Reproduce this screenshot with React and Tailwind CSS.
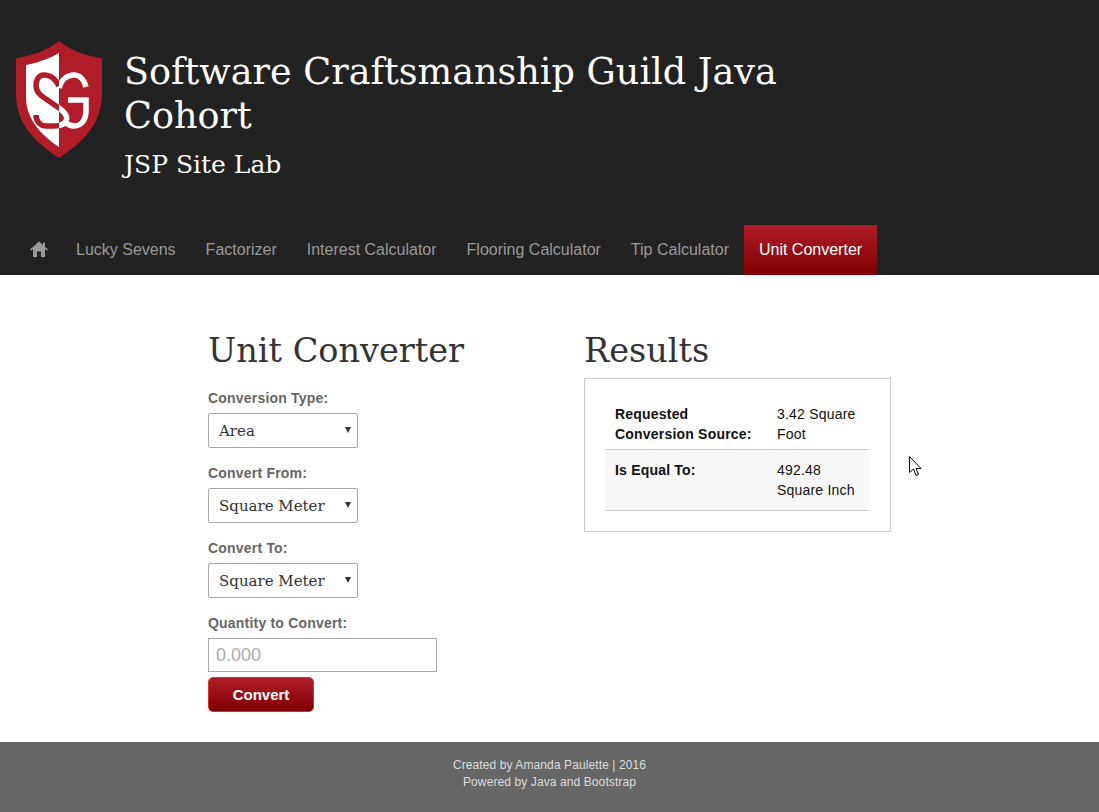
import React from "react";

const serif = "font-['DejaVu_Serif',serif]";
const sans = "font-['Liberation_Sans',Arial,sans-serif]";

const S_PATH = "M43 45C39 37 33 34 28 34C22 34 20 40 20 44C20 51 24 54 30 58L43 67C50 72 52 76 50 80C48 84 44 85 38 85L30 85C24 85 20 80 20 74";
const G_TOP = "M70 46C68 38 63 34 58 34C50 34 45 40 43 47";
const G_BOTTOM = "M49 81C52 84 55 85 58 85C66 85 70 78 70 70L70 59L52 59";

function Logo() {
  return (
    <svg width="86" height="118" viewBox="0 0 86 118" className="shrink-0">
      <defs>
        <clipPath id="left-half"><rect x="0" y="0" width="43" height="118" /></clipPath>
        <clipPath id="right-half"><rect x="43" y="0" width="43" height="118" /></clipPath>
      </defs>
      <path d="M43 0C54 9 70 15 85 17Q86 17 86 19L86 52C86 85 65 102 43 117C21 102 0 85 0 52L0 19Q0 17 1 17C16 15 32 9 43 0Z" fill="#b01c27" />
      <path d="M43 12C33 18 20 22 10 24L10 56C10 80 28 96 43 106Z" fill="#fff" />
      <g fill="none" strokeWidth="5.5">
        <path d={S_PATH} stroke="#b01c27" clipPath="url(#left-half)" />
        <path d={S_PATH} stroke="#fff" clipPath="url(#right-half)" />
        <path d={G_TOP} stroke="#fff" clipPath="url(#right-half)" />
        <path d={G_BOTTOM} stroke="#fff" clipPath="url(#right-half)" />
      </g>
    </svg>
  );
}

function Field({ label, value }) {
  return (
    <div className="mb-[15px]">
      <label className={`block text-sm font-bold leading-[20px] tracking-[0.2px] text-[#666] mb-[5px] ${sans}`}>{label}</label>
      <div className="relative w-[150px] h-[35px]">
        <select defaultValue={value} className={`appearance-none w-full h-full border border-[#aaa] rounded-[2px] bg-white pl-[10px] pt-[1px] text-[#333] text-[15px] ${serif}`}>
          <option>{value}</option>
        </select>
        <span className="absolute right-[7px] top-[14px] w-0 h-0 border-l-[3px] border-r-[3px] border-t-[6px] border-l-transparent border-r-transparent border-t-[#333]" />
      </div>
    </div>
  );
}

export default function App() {
  const nav = ["Lucky Sevens", "Factorizer", "Interest Calculator", "Flooring Calculator", "Tip Calculator"];
  return (
    <div className={`relative min-h-[812px] flex flex-col bg-white ${sans}`}>
      <header className="bg-[#222] h-[275px] flex flex-col">
        <div className="flex flex-1 pl-[16px] pt-[41px] gap-[22px]">
          <Logo />
          <div className="w-[700px] pt-[9px]">
            <h1 className={`text-[36.6px] leading-[44px] text-white ${serif}`}>Software Craftsmanship Guild Java Cohort</h1>
            <p className={`text-[25px] leading-[30px] mt-[12px] text-white ${serif}`}>JSP Site Lab</p>
          </div>
        </div>
        <nav className="h-[50px] flex items-stretch pl-[15px] text-base text-[#999]">
          <a className="w-[46px] pl-[15px] flex items-center">
            <svg width="18" height="16" viewBox="0 0 18 16" fill="#999" className="-mt-[2px]"><path d="M9 0.5L0 8.5L1 9.5L3 8V16H7V10.5H11V16H15V8L17 9.5L18 8.5L15 6V1.5H13V4L9 0.5Z" /></svg>
          </a>
          {nav.map((n) => (
            <a key={n} className="px-[15px] flex items-center">{n}</a>
          ))}
          <a className="px-[15px] flex items-center text-white bg-gradient-to-b from-[#b01c27] to-[#7f0000]">Unit Converter</a>
        </nav>
      </header>

      <main className="flex-1 flex pl-[208px] pt-[56px]">
        <section className="w-[376px]">
          <h2 className={`text-[33.5px] leading-[40px] text-[#333] mb-[17px] ${serif}`}>Unit Converter</h2>
          <Field label="Conversion Type:" value="Area" />
          <Field label="Convert From:" value="Square Meter" />
          <Field label="Convert To:" value="Square Meter" />
          <label className="block text-sm font-bold leading-[20px] tracking-[0.2px] text-[#666] mb-[5px]">Quantity to Convert:</label>
          <input placeholder="0.000" className="block w-[229px] h-[34px] border border-[#aaa] pl-[7px] text-lg placeholder:text-[#aaa] outline-none" />
          <button className="block mt-[5px] w-[106px] h-[35px] pt-[1px] rounded-[5px] border border-[#c33] bg-gradient-to-b from-[#b01c27] to-[#7f0000] text-white font-bold text-[15px]">Convert</button>
        </section>
        <section className="w-[307px]">
          <h2 className={`text-[33.5px] leading-[40px] text-[#333] mb-[7px] ${serif}`}>Results</h2>
          <div className="border border-[#ccc] px-[20px] py-[20px] h-[154px]">
            <table className="w-[264px] text-sm leading-[20px] tracking-[0.2px] text-[#111] border-collapse">
              <tbody>
                <tr className="border-b border-[#ccc]">
                  <td className="font-bold align-top pl-[10px] py-[5px] w-[172px]">Requested<br />Conversion Source:</td>
                  <td className="align-top pr-[10px] py-[5px]">3.42 Square Foot</td>
                </tr>
                <tr className="border-b border-[#ccc] bg-[#f8f8f8]">
                  <td className="font-bold align-top pl-[10px] py-[10px]">Is Equal To:</td>
                  <td className="align-top pr-[10px] py-[10px]">492.48 Square Inch</td>
                </tr>
              </tbody>
            </table>
          </div>
        </section>
      </main>

      <footer className="h-[70px] bg-[#666] text-center text-xs leading-[17px] tracking-[0.1px] text-[#ddd] pt-[15px]">
        <div>Created by Amanda Paulette | 2016</div>
        <div>Powered by Java and Bootstrap</div>
      </footer>

      <svg className="absolute left-[909px] top-[456px]" width="13" height="21" viewBox="0 0 13 21">
        <path d="M0.5 0.5V16.5L4.5 13L7 19.5L9.5 18.5L7 12.5H12Z" fill="#fff" stroke="#000" strokeWidth="1" />
      </svg>
    </div>
  );
}
